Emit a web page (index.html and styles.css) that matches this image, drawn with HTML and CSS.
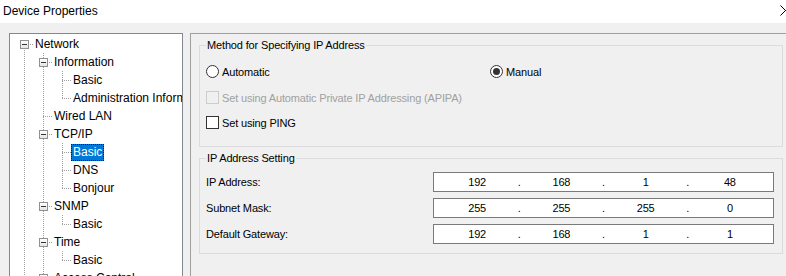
FILE: index.html
```html
<!DOCTYPE html>
<html lang="en">
<head>
    <meta charset="UTF-8">
    <meta name="viewport" content="width=device-width, initial-scale=1.0">
    <title>Device Properties</title>
    <link rel="stylesheet" href="styles.css">
</head>
<body>

    <div class="titlebar">
        <span class="title">Device Properties</span>
        <svg class="close" width="11" height="11" viewBox="0 0 11 11">
            <path d="M0.5 0.5 L10.5 10.5 M10.5 0.5 L0.5 10.5" stroke="#000" stroke-width="1" fill="none"/>
        </svg>
    </div>

    <div class="main">
        <!-- settings tree -->
        <div class="tree">
            <ul class="tree-root">
                <li class="first-root">
                    <div class="row"><span class="exp"><span class="box"></span></span><span class="label">Network</span></div>
                    <ul>
                        <li>
                            <div class="row"><span class="exp"><span class="box"></span></span><span class="label">Information</span></div>
                            <ul>
                                <li><div class="row"><span class="exp"></span><span class="label">Basic</span></div></li>
                                <li class="last"><div class="row"><span class="exp"></span><span class="label">Administration Information</span></div></li>
                            </ul>
                        </li>
                        <li><div class="row"><span class="exp"></span><span class="label">Wired LAN</span></div></li>
                        <li>
                            <div class="row"><span class="exp"><span class="box"></span></span><span class="label">TCP/IP</span></div>
                            <ul>
                                <li><div class="row"><span class="exp"></span><span class="label selected">Basic</span></div></li>
                                <li><div class="row"><span class="exp"></span><span class="label">DNS</span></div></li>
                                <li class="last"><div class="row"><span class="exp"></span><span class="label">Bonjour</span></div></li>
                            </ul>
                        </li>
                        <li>
                            <div class="row"><span class="exp"><span class="box"></span></span><span class="label">SNMP</span></div>
                            <ul>
                                <li class="last"><div class="row"><span class="exp"></span><span class="label">Basic</span></div></li>
                            </ul>
                        </li>
                        <li>
                            <div class="row"><span class="exp"><span class="box"></span></span><span class="label">Time</span></div>
                            <ul>
                                <li class="last"><div class="row"><span class="exp"></span><span class="label">Basic</span></div></li>
                            </ul>
                        </li>
                        <li>
                            <div class="row"><span class="exp"><span class="box"></span></span><span class="label">Access Control</span></div>
                        </li>
                    </ul>
                </li>
            </ul>
        </div>

        <!-- TCP/IP basic page -->
        <div class="panel">
            <fieldset class="group">
                <legend>Method for Specifying IP Address</legend>
                <div class="options">
                    <div class="opt"><span class="radio"></span>Automatic</div>
                    <div class="opt"><span class="radio checked"></span>Manual</div>
                    <div class="opt wide tall disabled"><span class="check"></span>Set using Automatic Private IP Addressing (APIPA)</div>
                    <div class="opt wide"><span class="check"></span>Set using PING</div>
                </div>
            </fieldset>

            <fieldset class="group">
                <legend>IP Address Setting</legend>
                <div class="ip-grid">
                    <span class="ip-label">IP Address:</span>
                    <div class="ip-box"><span>192</span><i>.</i><span>168</span><i>.</i><span>1</span><i>.</i><span>48</span></div>
                    <span class="ip-label">Subnet Mask:</span>
                    <div class="ip-box"><span>255</span><i>.</i><span>255</span><i>.</i><span>255</span><i>.</i><span>0</span></div>
                    <span class="ip-label">Default Gateway:</span>
                    <div class="ip-box"><span>192</span><i>.</i><span>168</span><i>.</i><span>1</span><i>.</i><span>1</span></div>
                </div>
            </fieldset>
        </div>
    </div>

</body>
</html>
```

FILE: styles.css
```css
html, body {
    margin: 0;
    padding: 0;
    height: 100%;
    overflow: hidden;
}

body {
    font-family: 'Liberation Sans', Arial, sans-serif;
    font-size: 11px;
    background-color: #f0f0f0;
    color: #000;
}

.titlebar {
    display: flex;
    justify-content: space-between;
    height: 23px;
    background-color: #fff;
}

.title {
    font-size: 12px;
    line-height: 16px;
    padding: 3px 0 0 3px;
}

.close {
    margin: 5px -5px 0 0;
}

.main {
    display: flex;
    padding-top: 10px;
}

/* tree view */

.tree {
    width: 173px;
    height: 260px;
    margin: 0 7px 0 9px;
    background-color: #fff;
    border: 1px solid #828790;
    overflow: hidden;
    font-size: 12px;
}

.tree ul {
    list-style: none;
    margin: 0;
    padding: 0 0 0 19px;
}

.tree .tree-root {
    padding: 1px 0 0 4px;
}

.tree li {
    background: repeating-linear-gradient(to bottom, #a0a0a0 0 1px, transparent 1px 2px) 10px 0 / 1px 100% no-repeat;
}

.tree li.last {
    background-size: 1px 9px;
}

.tree li.first-root {
    background-position: 10px 9px;
}

.row {
    display: flex;
    height: 18px;
    white-space: nowrap;
}

.exp {
    display: flex;
    align-items: center;
    flex: none;
    width: 19px;
    height: 18px;
    background: repeating-linear-gradient(to right, #a0a0a0 0 1px, transparent 1px 2px) 10px 9px / 9px 1px no-repeat;
}

.box {
    display: flex;
    align-items: center;
    justify-content: center;
    box-sizing: border-box;
    width: 9px;
    height: 9px;
    margin: 1px 0 0 6px;
    border: 1px solid #919191;
    background: linear-gradient(#fff, #e4e4e4);
}

.box::after {
    content: "";
    width: 5px;
    height: 1px;
    background-color: #333;
}

.label {
    height: 17px;
    line-height: 17px;
    padding: 0 2px;
    margin-top: 1px;
}

.label.selected {
    background-color: #0078d7;
    color: #fff;
    outline: 1px dotted #1c1c1c;
    outline-offset: -1px;
}

/* right page */

.panel {
    flex: 1;
    border-top: 1px solid #a0a0a0;
    border-left: 1px solid #a0a0a0;
    padding: 5px 3px 0 8px;
    letter-spacing: -0.15px;
}

.group {
    margin: 0 0 5px 0;
    padding: 7px 8px 9px 6px;
    border: 1px solid #dcdcdc;
    min-width: 0;
}

.group:first-child {
    padding-bottom: 11px;
}

.group legend {
    padding: 0 1px;
    line-height: 13px;
}

.options {
    display: grid;
    grid-template-columns: 284px 1fr;
}

.opt {
    display: flex;
    align-items: center;
    gap: 3px;
    height: 25px;
    white-space: nowrap;
}

.opt.wide {
    grid-column: 1 / 3;
}

.opt.tall {
    height: 26px;
    padding-top: 1px;
    box-sizing: border-box;
}

.opt.disabled {
    color: #a0a0a0;
}

.radio {
    display: flex;
    align-items: center;
    justify-content: center;
    box-sizing: border-box;
    width: 13px;
    height: 13px;
    border: 1px solid #333;
    border-radius: 50%;
    background-color: #fff;
}

.radio.checked::after {
    content: "";
    width: 7px;
    height: 7px;
    border-radius: 50%;
    background-color: #333;
}

.check {
    box-sizing: border-box;
    width: 13px;
    height: 13px;
    border: 1px solid #333;
    background-color: #fff;
}

.disabled .check {
    border-color: #cccccc;
    background-color: #f0f0f0;
}

.ip-grid {
    display: grid;
    grid-template-columns: 227px 341px;
    grid-auto-rows: 20px;
    row-gap: 6px;
    align-items: center;
}

.ip-box {
    display: grid;
    grid-template-columns: 1fr 4px 1fr 4px 1fr 4px 1fr;
    box-sizing: border-box;
    height: 20px;
    padding: 0 3px;
    border: 1px solid #7a7a7a;
    background-color: #fff;
    line-height: 18px;
    text-align: center;
}

.ip-box i {
    font-style: normal;
}
```
